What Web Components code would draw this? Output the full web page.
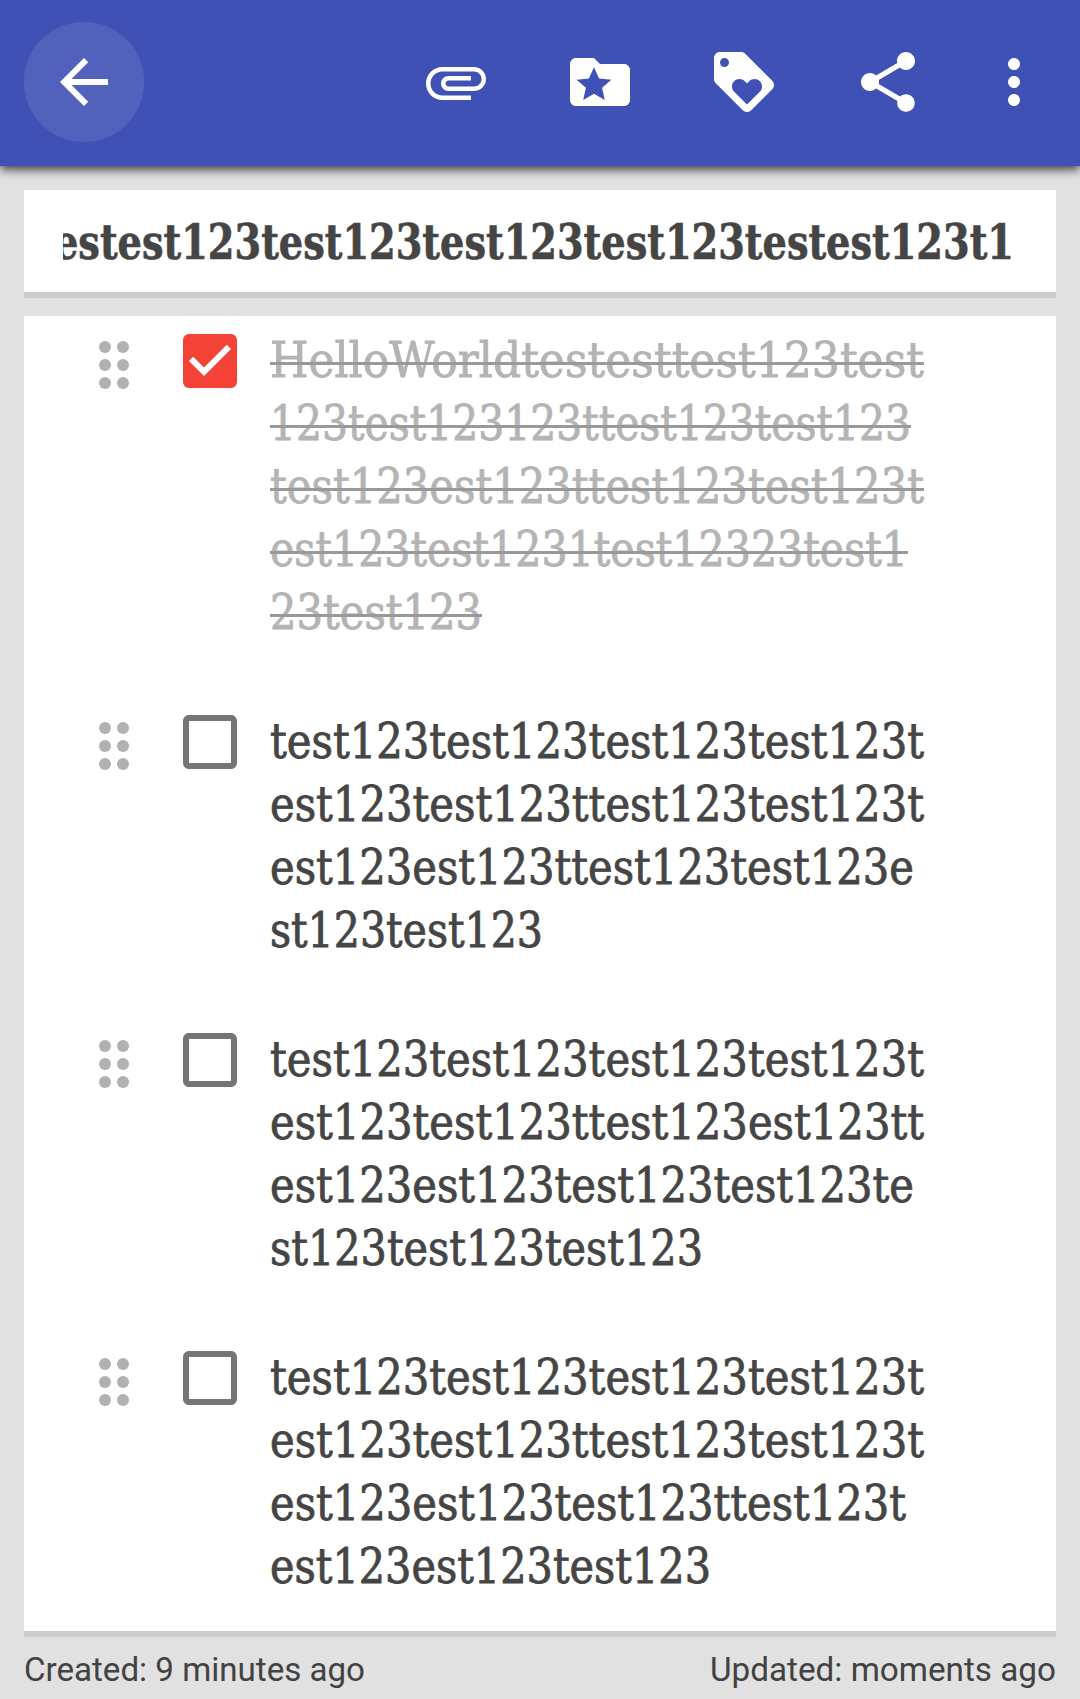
<!DOCTYPE html>
<html lang="en">
<head>
<meta charset="utf-8">
<title>Checklist note</title>
<style>
html,body{margin:0;padding:0;background:#e1e1e1}
body{width:1080px;height:1699px;overflow:hidden;color:#454545;font-family:"Roboto Slab","DejaVu Serif Condensed","DejaVu Serif",serif}
</style>
</head>
<body>
<note-app></note-app>
<script>
const define = (name, html, ready) => customElements.define(name, class extends HTMLElement {
  constructor() {
    super();
    const t = document.createElement('template');
    t.innerHTML = html;
    this.attachShadow({mode: 'open'}).append(t.content.cloneNode(true));
  }
  connectedCallback() { if (ready) ready.call(this, this.shadowRoot); }
});

// One line of text, condensed or widened to the advance width given in "w".
// "struck" lays a strike-through rule over it.
define('fit-line', `
<style>
:host{display:block;position:relative;white-space:nowrap}
span{display:inline-block;transform-origin:0 50%}
:host([struck])::after{content:"";position:absolute;left:0;right:0;top:33px;height:3px;background:#999}
</style><span><slot></slot></span>`, function (root) {
  const w = +this.getAttribute('w');
  const s = root.querySelector('span');
  this.style.width = w + 'px';
  s.style.transform = 'scaleX(' + w / s.getBoundingClientRect().width + ')';
});

const ICONS = {
  back: '<path d="M20 11H7.83l5.59-5.59L12 4l-8 8 8 8 1.41-1.41L7.83 13H20v-2z"/>',
  attachment: '<path d="M7.5 18C4.46 18 2 15.54 2 12.5S4.46 7 7.5 7H18c2.21 0 4 1.79 4 4s-1.79 4-4 4H9.5C8.12 15 7 13.88 7 12.5S8.12 10 9.5 10H17v1.5H9.5c-.55 0-1 .45-1 1s.45 1 1 1H18c1.38 0 2.5-1.12 2.5-2.5S19.38 8.5 18 8.5H7.5c-2.21 0-4 1.79-4 4s1.79 4 4 4H17V18H7.5z"/>',
  folder: '<path fill-rule="evenodd" d="M20 6h-8l-2-2H4c-1.1 0-2 .9-2 2v12c0 1.1.9 2 2 2h16c1.1 0 2-.9 2-2V8c0-1.1-.9-2-2-2zM10 7.1l1.7 3.75 4.1.4-3.1 2.7.9 4.05-3.6-2.1L6.4 18l.9-4.05-3.1-2.7 4.1-.4z"/>',
  tag: '<path d="M21.41 11.58l-9-9C12.05 2.22 11.55 2 11 2H4c-1.1 0-2 .9-2 2v7c0 .55.22 1.05.59 1.42l9 9c.36.36.86.58 1.41.58.55 0 1.05-.22 1.41-.59l7-7c.37-.36.59-.86.59-1.41 0-.55-.23-1.06-.59-1.42zM5.5 7C4.67 7 4 6.33 4 5.5S4.67 4 5.5 4 7 4.67 7 5.5 6.33 7 5.5 7zm11.77 8.27L13 19.54l-4.27-4.27C8.28 14.81 8 14.19 8 13.5c0-1.38 1.12-2.5 2.5-2.5.69 0 1.32.28 1.77.74l.73.72.73-.73c.45-.45 1.08-.73 1.77-.73 1.38 0 2.5 1.12 2.5 2.5 0 .69-.28 1.32-.73 1.77z"/>',
  share: '<path d="M18 16.08c-.76 0-1.44.3-1.96.77L8.91 12.7c.05-.23.09-.46.09-.7s-.04-.47-.09-.7l7.05-4.11c.54.5 1.25.81 2.04.81 1.66 0 3-1.34 3-3s-1.34-3-3-3-3 1.34-3 3c0 .24.04.47.09.7L8.04 9.81C7.5 9.31 6.79 9 6 9c-1.66 0-3 1.34-3 3s1.34 3 3 3c.79 0 1.5-.31 2.04-.81l7.12 4.16c-.05.21-.08.43-.08.65 0 1.61 1.31 2.92 2.92 2.92s2.92-1.31 2.92-2.92-1.31-2.92-2.92-2.92z"/>',
  more: '<path d="M12 8c1.1 0 2-.9 2-2s-.9-2-2-2-2 .9-2 2 .9 2 2 2zm0 2c-1.1 0-2 .9-2 2s.9 2 2 2 2-.9 2-2-.9-2-2-2zm0 6c-1.1 0-2 .9-2 2s.9 2 2 2 2-.9 2-2-.9-2-2-2z"/>',
  checked: '<rect x="3" y="3" width="18" height="18" rx="2" fill="#f44336"/><path fill="#fff" d="M10 17l-5-5 1.41-1.41L10 14.17l7.59-7.59L19 8l-9 9z"/>',
  unchecked: '<path fill="#757575" d="M19 5v14H5V5h14m0-2H5c-1.1 0-2 .9-2 2v14c0 1.1.9 2 2 2h14c1.1 0 2-.9 2-2V5c0-1.1-.9-2-2-2z"/>',
  handle: '<g fill="#b1b1b1"><circle cx="9" cy="6" r="2"/><circle cx="15" cy="6" r="2"/><circle cx="9" cy="12" r="2"/><circle cx="15" cy="12" r="2"/><circle cx="9" cy="18" r="2"/><circle cx="15" cy="18" r="2"/></g>'
};
customElements.define('md-icon', class extends HTMLElement {
  static observedAttributes = ['name'];
  constructor() {
    super();
    this.attachShadow({mode: 'open'}).innerHTML = `
<style>:host{display:block;width:72px;height:72px;flex:none}svg{display:block;fill:currentColor}</style>
<svg width="72" height="72" viewBox="0 0 24 24"></svg>`;
  }
  attributeChangedCallback(_, old, name) {
    this.shadowRoot.querySelector('svg').innerHTML = ICONS[name] || '';
  }
});

define('app-toolbar', `
<style>
:host{display:flex;align-items:center;box-sizing:border-box;height:166px;padding:0 30px 2px 24px;background:#3f51b5;color:#fff;box-shadow:0 3px 10px rgba(0,0,0,.8);position:relative}
.back{display:grid;place-items:center;width:120px;height:120px;border-radius:50%;background:rgba(255,255,255,.1)}
nav{display:flex;gap:72px;margin-left:auto}
nav md-icon:last-child{margin-left:-18px}
</style>
<div class="back"><md-icon name="back"></md-icon></div>
<nav><md-icon name="attachment"></md-icon><md-icon name="folder"></md-icon><md-icon name="tag"></md-icon><md-icon name="share"></md-icon><md-icon name="more"></md-icon></nav>`);

define('paper-card', `<style>:host{display:block;box-sizing:border-box;margin:0 24px;background:#fff;border-bottom:6px solid #ccc;overflow:hidden}</style><slot></slot>`);

define('note-title', `
<style>
:host{display:flex;justify-content:flex-end;overflow:hidden;box-sizing:border-box;margin:0 42px 0 39px;height:102px;padding-top:2px;align-items:center;font-size:48px;font-weight:700;line-height:63px;-webkit-text-stroke:.6px #454545}
fit-line{flex:none}
</style><fit-line w="960"><slot></slot></fit-line>`);

define('check-item', `
<style>
:host{display:flex;padding:13px 0 53px 54px}
.handle{margin-right:24px}
.box{margin-right:24px;margin-top:-4px}
.text{font-size:48px;line-height:63px;-webkit-text-stroke:.8px #454545}
:host([done]) .text{color:#b4b4b4;-webkit-text-stroke-color:#b4b4b4}
</style>
<md-icon class="handle" name="handle"></md-icon><md-icon class="box"></md-icon><div class="text"><slot></slot></div>`, function (root) {
  root.querySelector('.box').setAttribute('name', this.hasAttribute('done') ? 'checked' : 'unchecked');
});

define('note-footer', `
<style>:host{display:flex;justify-content:space-between;padding:14px 24px 0;font:33px/38px Roboto,sans-serif;color:#424242}</style>
<fit-line w="341">Created: 9 minutes ago</fit-line><fit-line w="346">Updated: moments ago</fit-line>`);

define('note-app', `
<style>
:host{display:flex;flex-direction:column;height:1699px}
.title{height:108px;margin-top:24px}
.list{height:1321px;margin-top:18px}
</style>
<app-toolbar></app-toolbar>
<paper-card class="title"><note-title>estest123test123test123test123testest123t1</note-title></paper-card>
<paper-card class="list">
<check-item done>
<fit-line struck w="654">HelloWorldtestesttest123test</fit-line>
<fit-line struck w="641">123test123123ttest123test123</fit-line>
<fit-line struck w="654">test123est123ttest123test123t</fit-line>
<fit-line struck w="638">est123test1231test12323test1</fit-line>
<fit-line struck w="212">23test123</fit-line>
</check-item>
<check-item>
<fit-line w="654">test123test123test123test123t</fit-line>
<fit-line w="654">est123test123ttest123test123t</fit-line>
<fit-line w="644">est123est123ttest123test123e</fit-line>
<fit-line w="273">st123test123</fit-line>
</check-item>
<check-item>
<fit-line w="654">test123test123test123test123t</fit-line>
<fit-line w="654">est123test123ttest123est123tt</fit-line>
<fit-line w="644">est123est123test123test123te</fit-line>
<fit-line w="433">st123test123test123</fit-line>
</check-item>
<check-item>
<fit-line w="654">test123test123test123test123t</fit-line>
<fit-line w="654">est123test123ttest123test123t</fit-line>
<fit-line w="636">est123est123test123ttest123t</fit-line>
<fit-line w="441">est123est123test123</fit-line>
</check-item>
</paper-card>
<note-footer></note-footer>`);
</script>
</body>
</html>
